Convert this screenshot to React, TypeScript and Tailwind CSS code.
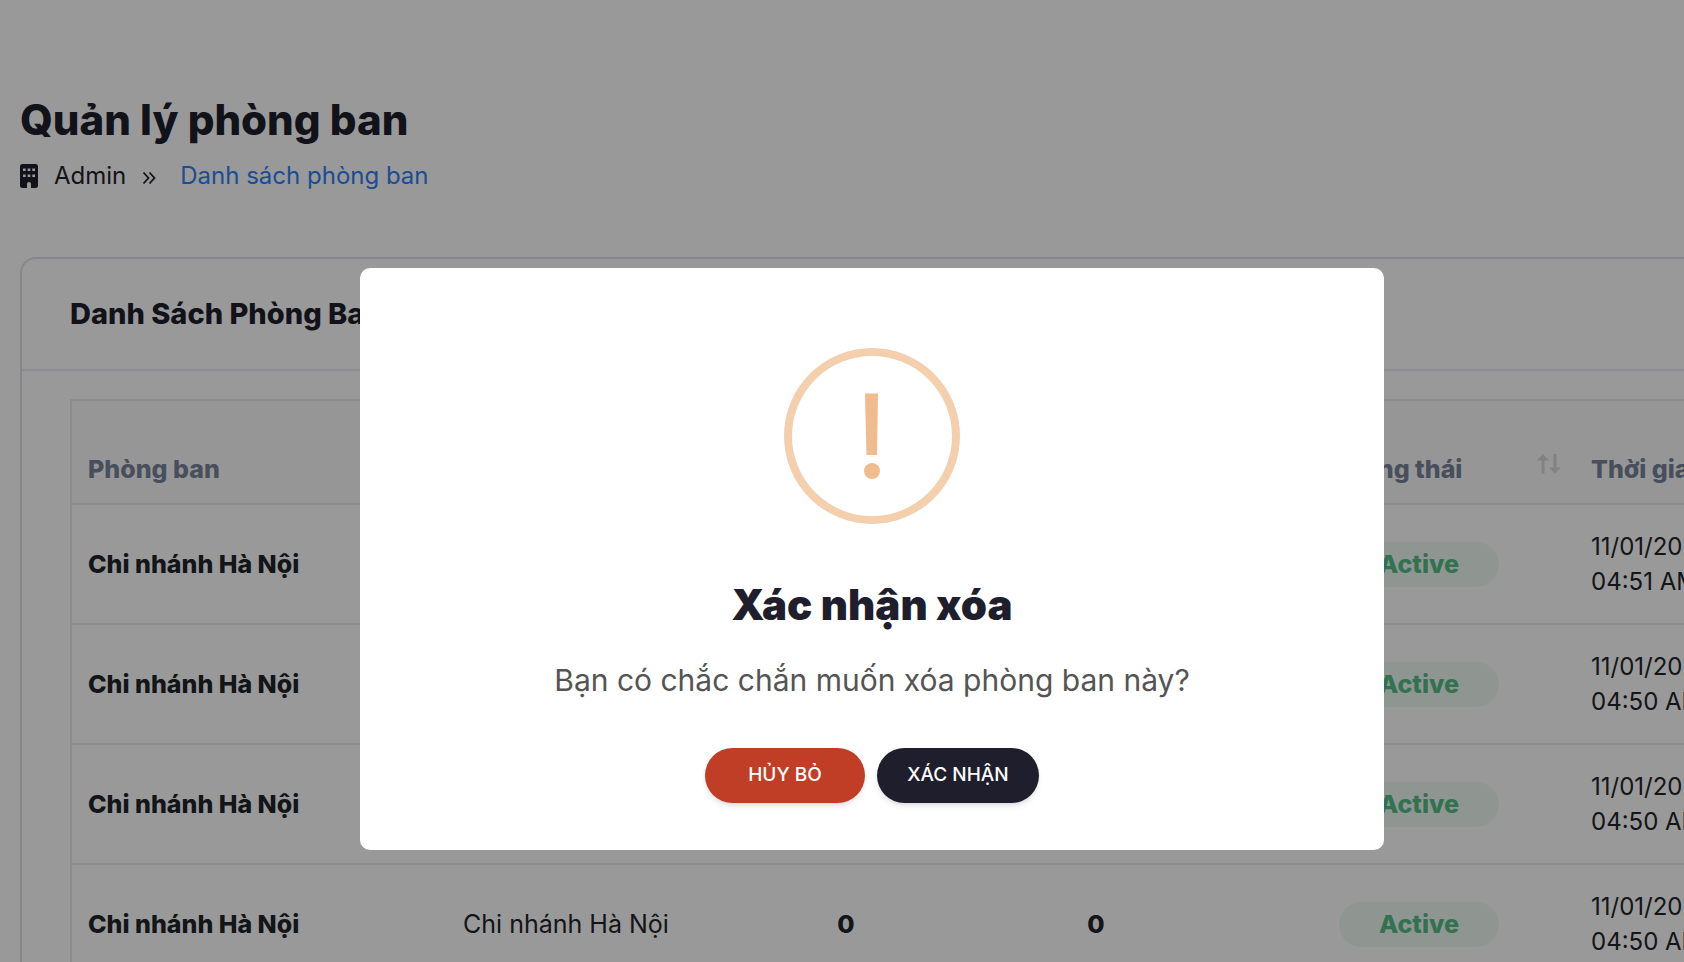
import React, { useState } from 'react';

interface Department {
    id: number;
    name: string;
    branch: string;
    employees: number;
    positions: number;
    status: string;
    date: string;
    time: string;
}

const departments: Department[] = [
    { id: 1, name: 'Chi nhánh Hà Nội', branch: 'Chi nhánh Hà Nội', employees: 0, positions: 0, status: 'Active', date: '11/01/2025', time: '04:51 AM' },
    { id: 2, name: 'Chi nhánh Hà Nội', branch: 'Chi nhánh Hà Nội', employees: 0, positions: 0, status: 'Active', date: '11/01/2025', time: '04:50 AM' },
    { id: 3, name: 'Chi nhánh Hà Nội', branch: 'Chi nhánh Hà Nội', employees: 0, positions: 0, status: 'Active', date: '11/01/2025', time: '04:50 AM' },
    { id: 4, name: 'Chi nhánh Hà Nội', branch: 'Chi nhánh Hà Nội', employees: 0, positions: 0, status: 'Active', date: '11/01/2025', time: '04:50 AM' },
];

const BuildingIcon = () => (
    <svg viewBox="0 0 18 24" className="w-[18px] h-6" fill="currentColor" aria-hidden="true">
        <path
            fillRule="evenodd"
            d="M2.5 0h13A2.5 2.5 0 0 1 18 2.5v19a2.5 2.5 0 0 1-2.5 2.5H11v-4a2 2 0 0 0-4 0v4H2.5A2.5 2.5 0 0 1 0 21.500v-19A2.500 2.500 0 0 1 2.500 0ZM3 4.500v2.500h2.700V4.500ZM7.650 4.500v2.500h2.700V4.500ZM12.300 4.500v2.500h2.700V4.500ZM3 10.500v2.500h2.700v-2.500ZM7.650 10.500v2.500h2.700v-2.500ZM12.300 10.500v2.500h2.700v-2.500Z"
        />
    </svg>
);

const ChevronsIcon = () => (
    <svg viewBox="0 0 14 14" className="w-3.5 h-3.5" fill="none" stroke="currentColor" strokeWidth="1.8" aria-hidden="true">
        <path d="M1.500 1.500 6.500 7l-5 5.500M7.500 1.500l5 5.500-5 5.500" />
    </svg>
);

const SortIcon = () => (
    <svg viewBox="0 0 24 20" className="w-6 h-5" fill="currentColor" aria-hidden="true">
        <path d="M6 0 12 6.500H7.500V19.500h-3V6.500H0ZM16.500 0h3v13.500H24L18 19.500l-6-6h4.500Z" />
    </svg>
);

const DepartmentTable = () => (
    <div className="border-2 border-[#e9e9e9]">
        <table className="w-full table-fixed border-separate border-spacing-0 text-[25px] leading-[35px] text-[#212529]">
            <thead className="bg-[#fafafa] text-[#78849a]">
                <tr className="h-[104px] [&>th]:border-b-2 [&>th]:border-[#e9e9e9] [&>th]:px-4 [&>th]:pb-4 [&>th]:align-bottom [&>th]:font-extrabold">
                    <th className="w-[375px] text-left">Phòng ban</th>
                    <th className="w-[316px] text-left">Chi nhánh</th>
                    <th className="w-[166px]">Nhân viên</th>
                    <th className="w-[334px]">Chức vụ</th>
                    <th className="w-[312px]">
                        <span className="flex items-center">
                            <span className="flex-1">Trạng thái</span>
                            <button type="button" aria-label="Sắp xếp" className="-mr-0.5 pb-3 pl-4 text-[#d8d9dd]">
                                <SortIcon />
                            </button>
                        </span>
                    </th>
                    <th className="text-left">Thời gian tạo</th>
                </tr>
            </thead>
            <tbody>
                {departments.map(department => (
                    <tr key={department.id} className="h-[120px] [&>td]:border-b-2 [&>td]:border-[#e9e9e9] [&>td]:px-4">
                        <td className="font-extrabold">{department.name}</td>
                        <td>{department.branch}</td>
                        <td className="text-center font-extrabold">{department.employees}</td>
                        <td className="text-center font-extrabold">{department.positions}</td>
                        <td className="text-center">
                            <span className="inline-block rounded-full bg-[#effaf3] px-10 py-[5px] align-middle font-extrabold text-[#55be85]">
                                {department.status}
                            </span>
                        </td>
                        <td className="text-2xl leading-[35px]">
                            {department.date}
                            <br />
                            {department.time}
                        </td>
                    </tr>
                ))}
            </tbody>
        </table>
    </div>
);

interface ConfirmModalProps {
    onClose: () => void;
}

const ConfirmModal: React.FC<ConfirmModalProps> = ({ onClose }) => {
    return (
        <div className="fixed inset-0 flex items-start justify-center bg-black/40 pt-[268px] pl-[60px]">
            <div
                role="dialog"
                aria-modal="true"
                aria-labelledby="confirm-title"
                className="flex w-full max-w-5xl flex-col items-center rounded-[10px] bg-white pt-20 pb-[47px] text-center"
            >
                <svg viewBox="0 0 176 176" className="h-44 w-44" aria-hidden="true">
                    <circle cx="88" cy="88" r="84" fill="none" stroke="#f4cfad" strokeWidth="8" />
                    <path d="M81 45.500h13l-1 61.500H82.500Z" fill="#f0bc8e" />
                    <circle cx="88" cy="123" r="8" fill="#f0bc8e" />
                </svg>
                <h2 id="confirm-title" className="mt-14 text-[42px] leading-[50px] font-black text-[#1e1e2d]">
                    Xác nhận xóa
                </h2>
                <p className="mt-[30px] text-[30px] leading-10 text-[#545454]">
                    Bạn có chắc chắn muốn xóa phòng ban này?
                </p>
                <div className="mt-12 flex gap-3 text-[19px] font-medium text-white">
                    <button type="button" onClick={onClose} className="h-[55px] w-40 rounded-full bg-[#c13e26] shadow-md">
                        HỦY BỎ
                    </button>
                    <button type="button" onClick={onClose} className="h-[55px] w-[162px] rounded-full bg-[#1e1e2d] shadow-md">
                        XÁC NHẬN
                    </button>
                </div>
            </div>
        </div>
    );
};

export default function App() {
    const [isConfirmOpen, setIsConfirmOpen] = useState(true);

    return (
        <div className="h-screen overflow-hidden bg-white font-['Inter',sans-serif] text-[#1e1e2d]">
            <main className="min-w-[1900px] px-5 pt-[90px]">
                <h1 className="text-[42px] leading-[60px] font-extrabold">Quản lý phòng ban</h1>
                <nav className="mt-2 flex items-center text-2xl leading-9">
                    <BuildingIcon />
                    <span className="ml-4">Admin</span>
                    <span className="mt-1 mr-6 ml-4">
                        <ChevronsIcon />
                    </span>
                    <a href="#departments" className="text-[#2f7ff8]">
                        Danh sách phòng ban
                    </a>
                </nav>

                <section id="departments" className="mt-[63px] rounded-2xl border-2 border-[#dee2e6]">
                    <div className="flex h-28 items-center border-b-2 border-[#ebebf2] px-12">
                        <h3 className="text-[29px] leading-10 font-extrabold">Danh Sách Phòng Ban</h3>
                    </div>
                    <div className="px-12 py-7">
                        <DepartmentTable />
                    </div>
                </section>
            </main>

            {isConfirmOpen && <ConfirmModal onClose={() => setIsConfirmOpen(false)} />}
        </div>
    );
}
